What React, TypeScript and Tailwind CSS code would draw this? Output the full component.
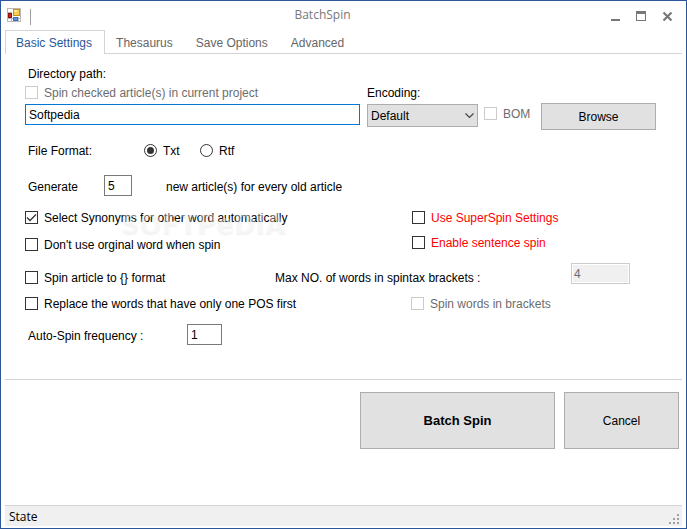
import { useState } from "react";
import type { ReactNode } from "react";

function AppIcon() {
  return (
    <svg width="14" height="14" viewBox="0 0 14 14" shapeRendering="crispEdges" aria-hidden="true">
      <path d="M0.5 0.5h13v13h-13z" fill="#ffffff" stroke="#b8b8b8" />
      <path d="M0 4.5h5M0 10.5h14M4.5 10v4M11.5 9v5" stroke="#b8b8b8" />
      <rect x="1" y="5" width="4" height="5" fill="#c3271b" />
      <path d="M1.5 5.5h3v4h-3z" fill="none" stroke="#8e1008" />
      <path d="M6.5 1.5h6v6h-6z" fill="#f8cf4a" stroke="#c79310" />
      <rect x="7" y="2" width="3" height="2" fill="#fdeb9c" />
      <path d="M6.5 9.5h4v3h-4z" fill="#5b95ea" stroke="#3a6fc6" />
    </svg>
  );
}

function TitleBar() {
  return (
    <header className="flex h-[29px] items-start justify-between pl-[6px] pr-[14px]">
      <div className="flex w-6 pt-[7px]">
        <AppIcon />
        <span className="ml-[9px] h-4 w-px shrink-0 translate-y-px bg-[#a0a0a0]" />
      </div>
      <h1 className="flex-1 pt-[5px] pl-1 text-center font-['Open_Sans',sans-serif] text-[12px] leading-[18px] text-[#777777]">
        BatchSpin
      </h1>
      <div className="flex gap-4 pt-[10px] text-[#777777]">
        <button type="button" aria-label="Minimize">
          <svg width="10" height="11" viewBox="0 0 10 11" shapeRendering="crispEdges">
            <rect x="1" y="8" width="9" height="2" fill="currentColor" />
          </svg>
        </button>
        <button type="button" aria-label="Maximize">
          <svg width="10" height="11" viewBox="0 0 10 11" shapeRendering="crispEdges">
            <path d="M0 0h10v10H0zM1 3v6h8V3z" fill="currentColor" fillRule="evenodd" />
          </svg>
        </button>
        <button type="button" aria-label="Close">
          <svg width="10" height="11" viewBox="0 0 10 11">
            <path d="M1.500 1.500l8 8M9.500 1.500l-8 8" stroke="currentColor" strokeWidth="2.200" />
          </svg>
        </button>
      </div>
    </header>
  );
}

const tabs = ["Basic Settings", "Thesaurus", "Save Options", "Advanced"];

function TabBar() {
  const [active, setActive] = useState(tabs[0]);
  return (
    <nav role="tablist" className="flex h-6 border-b border-[#d4d4d4]">
      {tabs.map((tab) => (
        <button
          key={tab}
          type="button"
          role="tab"
          aria-selected={tab === active}
          onClick={() => setActive(tab)}
          className={
            tab === active
              ? "-mb-px border border-b-0 border-[#d4d4d4] bg-white pr-3 pl-[10px] text-[#2b579a]"
              : "pt-[2px] pr-3 pl-[11px] text-[#666666]"
          }
        >
          {tab}
        </button>
      ))}
    </nav>
  );
}

type ChoiceProps = {
  children: ReactNode;
  checked?: boolean;
  disabled?: boolean;
  highlight?: boolean;
};

function Check({ children, checked, disabled, highlight }: ChoiceProps) {
  const tone = disabled ? "text-[#6d6d6d]" : highlight ? "text-[#ff0000]" : "text-black";
  return (
    <label className={`flex h-[17px] items-center gap-[6px] whitespace-nowrap ${tone}`}>
      <span className="relative flex">
        <input
          type="checkbox"
          defaultChecked={checked}
          disabled={disabled}
          className="peer size-[13px] appearance-none border border-[#333333] bg-white disabled:border-[#cccccc]"
        />
        <svg
          viewBox="0 0 13 13"
          className="pointer-events-none absolute inset-0 hidden size-[13px] peer-checked:block"
          aria-hidden="true"
        >
          <path d="M2 6.500l3 3 6-6" fill="none" stroke="#333333" strokeWidth="1.300" />
        </svg>
      </span>
      {children}
    </label>
  );
}

function Radio({ children, checked }: ChoiceProps) {
  return (
    <label className="flex w-14 items-center gap-[6px]">
      <span className="relative flex">
        <input
          type="radio"
          name="format"
          defaultChecked={checked}
          className="peer size-[13px] appearance-none rounded-full border border-[#333333] bg-white"
        />
        <span className="pointer-events-none absolute inset-[3px] hidden rounded-full bg-[#333333] peer-checked:block" />
      </span>
      {children}
    </label>
  );
}

const field = "h-[21px] border border-[#7a7a7a] bg-white px-[3px] text-[12px]";
const pushButton = "border border-[#adadad] bg-[#e1e1e1] text-black";

function SettingsForm() {
  return (
    <form className="pt-3 pr-[26px] pl-5">
      <div className="flex items-start">
        <div className="flex-1">
          <label htmlFor="path" className="block pl-[3px]">
            Directory path:
          </label>
          <div className="mt-[2px]">
            <Check disabled>Spin checked article(s) in current project</Check>
          </div>
          <input
            id="path"
            defaultValue="Softpedia"
            className="mt-[3px] block h-[21px] w-full border border-[#0078d7] px-[3px] text-[12px]"
          />
        </div>
        <div className="ml-[7px] w-[111px] pt-[19px]">
          <label htmlFor="encoding" className="block">
            Encoding:
          </label>
          <div className="relative mt-[3px]">
            <select
              id="encoding"
              className="block h-[23px] w-full appearance-none border border-[#adadad] bg-[#e1e1e1] px-[3px] text-[12px]"
            >
              <option>Default</option>
            </select>
            <svg
              width="9"
              height="6"
              viewBox="0 0 9 6"
              className="pointer-events-none absolute top-[9px] right-1"
              aria-hidden="true"
            >
              <path d="M0.5 0.5l4 4 4-4" fill="none" stroke="#444444" strokeWidth="1.200" />
            </svg>
          </div>
        </div>
        <div className="ml-[6px] w-[57px] pt-[39px]">
          <Check disabled>BOM</Check>
        </div>
        <button type="button" className={`mt-[37px] h-[27px] w-[115px] ${pushButton}`}>
          Browse
        </button>
      </div>

      <fieldset className="mt-3 flex h-[17px] items-center">
        <span className="w-[119px] pl-[3px]">File Format:</span>
        <Radio checked>Txt</Radio>
        <Radio>Rtf</Radio>
      </fieldset>

      <div className="mt-4 flex h-[21px] items-end">
        <label htmlFor="count" className="w-[79px] pb-px pl-[3px]">
          Generate
        </label>
        <input id="count" defaultValue="5" className={`w-7 ${field}`} />
        <span className="ml-[34px] pb-px">new article(s) for every old article</span>
      </div>

      <div className="relative mt-[13px] grid grid-cols-[387px_1fr] items-start">
        <div className="flex flex-col gap-[10px]">
          <Check checked>Select Synonyms for other word automatically</Check>
          <Check>Don't use orginal word when spin</Check>
        </div>
        <div className="flex flex-col gap-2">
          <Check highlight>Use SuperSpin Settings</Check>
          <Check highlight>Enable sentence spin</Check>
        </div>
        <span
          aria-hidden="true"
          className="pointer-events-none absolute top-0 left-24 font-['DejaVu_Sans',sans-serif] text-[26px] leading-[30px] font-bold text-white/40 [text-shadow:0_2px_2px_rgb(0_0_0/0.06)]"
        >
          SOFTPeDIA
        </span>
      </div>

      <div className="mt-[10px] flex h-[23px] items-end">
        <div className="w-[250px]">
          <Check>Spin article to {"{}"} format</Check>
        </div>
        <label htmlFor="max" className="w-[296px]">
          Max NO. of words in spintax brackets :
        </label>
        <input
          id="max"
          disabled
          defaultValue="4"
          className="h-[21px] w-[59px] self-start border border-[#cccccc] bg-[#f0f0f0] px-[2px] text-[12px] text-[#6d6d6d] shadow-[inset_0_0_0_1px_#ffffff]"
        />
      </div>

      <div className="mt-[9px] grid grid-cols-[386px_1fr]">
        <Check>Replace the words that have only one POS first</Check>
        <Check disabled>Spin words in brackets</Check>
      </div>

      <div className="mt-3 flex h-[21px] items-end">
        <label htmlFor="frequency" className="w-[162px] pb-px pl-[3px]">
          Auto-Spin frequency :
        </label>
        <input id="frequency" defaultValue="1" className={`w-[35px] ${field}`} />
      </div>
    </form>
  );
}

function StatusBar() {
  return (
    <footer className="mt-auto flex h-[21px] items-end justify-between border-t border-[#d4d4d4] bg-[#f0f0f0] pr-px pl-1 font-['Open_Sans',sans-serif]">
      <span className="leading-[18px]">State</span>
      <svg width="13" height="13" viewBox="0 0 13 13" shapeRendering="crispEdges" fill="#a0a0a0" aria-hidden="true">
        <path d="M9 1h2v2h-2zM5 5h2v2h-2zM9 5h2v2h-2zM1 9h2v2h-2zM5 9h2v2h-2zM9 9h2v2h-2z" />
      </svg>
    </footer>
  );
}

export default function App() {
  return (
    <div className="flex min-h-screen flex-col border border-[#2b579a] bg-white font-['Liberation_Sans',Arial,sans-serif] text-[12px] leading-4 text-black">
      <TitleBar />
      <main className="flex flex-1 flex-col px-1 pb-[2px]">
        <TabBar />
        <SettingsForm />
        <div className="mt-[34px] flex justify-end gap-[9px] border-t border-[#d4d4d4] pt-3 pr-[3px]">
          <button type="button" className={`h-[57px] w-[195px] text-[13px] font-bold ${pushButton}`}>
            Batch Spin
          </button>
          <button type="button" className={`h-[57px] w-[115px] ${pushButton}`}>
            Cancel
          </button>
        </div>
        <StatusBar />
      </main>
    </div>
  );
}
